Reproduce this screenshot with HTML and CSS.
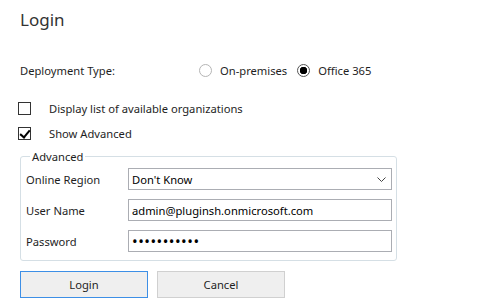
FILE: index.html
```html
<!DOCTYPE html>
<html lang="en">
<head>
    <meta charset="UTF-8">
    <title>Login</title>
    <link rel="stylesheet" href="styles.css">
</head>
<body>
    <h1 class="title">Login</h1>

    <div class="deploy-row">
        <span class="deploy-label">Deployment Type:</span>
        <label class="radio"><input type="radio" name="deploy"> On-premises</label>
        <label class="radio"><input type="radio" name="deploy" checked> Office 365</label>
    </div>

    <div class="checks">
        <label class="check"><input type="checkbox"> <span>Display list of available organizations</span></label>
        <label class="check"><input type="checkbox" checked> <span>Show Advanced</span></label>
    </div>

    <fieldset class="advanced">
        <legend>Advanced</legend>
        <label for="region">Online Region</label>
        <div class="select-wrap">
            <select id="region">
                <option>Don't Know</option>
            </select>
            <svg class="chevron" width="9" height="5" viewBox="0 0 9 5"><path d="M0.5 0.5 L4.5 4.5 L8.5 0.5" fill="none" stroke="#444" stroke-width="1"/></svg>
        </div>
        <label for="user">User Name</label>
        <input type="text" id="user" value="admin@pluginsh.onmicrosoft.com">
        <label for="pass">Password</label>
        <input type="password" id="pass" class="pass" value="passwordabc">
    </fieldset>

    <div class="buttons">
        <button class="primary">Login</button>
        <button>Cancel</button>
    </div>
</body>
</html>
```

FILE: styles.css
```css
* {
    box-sizing: border-box;
    font-family: "Noto Sans", "Open Sans", sans-serif;
}
body {
    margin: 0;
    padding: 0 0 0 20px;
    width: 488px;
    height: 305px;
    background: #fff;
    color: #1e1e1e;
    font-size: 11.2px;
}
.title {
    margin: 0;
    padding-top: 8px;
    height: 52px;
    font-size: 17px;
    font-weight: normal;
    color: #333;
}
.deploy-row {
    display: flex;
    align-items: center;
    height: 20px;
    margin-top: 8px;
}
.deploy-label {
    width: 179px;
}
.radio {
    display: flex;
    align-items: center;
    margin-right: 10px;
}
.radio input {
    appearance: none;
    width: 13px;
    height: 13px;
    margin: 0 8px 0 0;
    border: 1px solid #b5b5b5;
    border-radius: 50%;
    background: #fff;
}
.radio input:checked {
    border-color: #555;
    background: radial-gradient(circle, #000 3.5px, #fff 4px);
}
.checks {
    display: flex;
    flex-direction: column;
    gap: 12px;
    margin-top: 22px;
}
.check {
    display: flex;
    align-items: center;
    height: 13px;
}
.check input {
    appearance: none;
    width: 13px;
    height: 13px;
    margin: 0 18px 0 -2px;
    border: 1px solid #333;
    background: #fff;
    position: relative;
}
.check input:checked::after {
    content: "";
    position: absolute;
    left: 3px;
    top: 0px;
    width: 4px;
    height: 8px;
    border: solid #000;
    border-width: 0 2px 2px 0;
    transform: rotate(40deg);
}
.advanced {
    margin: 9px 0 0 0;
    width: 377px;
    padding: 4px 4px 8px 4px;
    border: 1px solid #d5dfe5;
    border-radius: 3px;
    display: grid;
    grid-template-columns: 103px 264px;
    row-gap: 9px;
    align-items: center;
}
.advanced legend {
    padding: 0 2px;
    margin-left: 5px;
    font-size: 11.2px;
}
.advanced label {
    padding-left: 1px;
}
.advanced input, .advanced select {
    width: 264px;
    height: 22px;
    border: 1px solid #abadb3;
    padding: 0 3px;
    font-size: 11.2px;
    color: #000;
    background: #fff;
    border-radius: 0;
    outline: none;
}
.advanced .pass {
    font-size: 15px;
    letter-spacing: 0.5px;
}
.advanced select {
    appearance: none;
}
.select-wrap {
    position: relative;
}
.chevron {
    position: absolute;
    right: 6px;
    top: 9px;
}
.buttons {
    display: flex;
    gap: 9px;
    margin-top: 10px;
}
.buttons button {
    width: 128px;
    height: 27px;
    background: #efefef;
    border: 1px solid #d0d0d0;
    font-size: 11.2px;
    color: #1e1e1e;
}
.buttons .primary {
    border-color: #3d8fe6;
}
```
